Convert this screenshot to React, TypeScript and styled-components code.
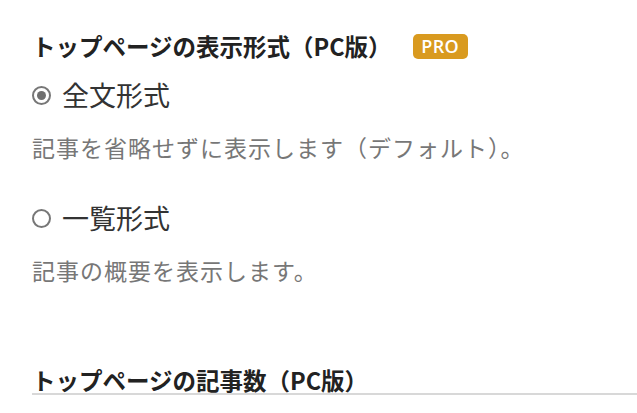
import React, { useState } from 'react';
import styled, { createGlobalStyle } from 'styled-components';

const GlobalStyle = createGlobalStyle`
  html, body {
    margin: 0;
    padding: 0;
    background: #fff;
  }
  body {
    font-family: "Noto Sans CJK JP", "Noto Sans", sans-serif;
  }
`;

const Wrapper = styled.div`
  box-sizing: border-box;
  width: 637px;
  height: 413px;
  overflow: hidden;
  padding: 32px 0 0 32px;
`;

const Section = styled.section`
  display: flex;
  flex-direction: column;
`;

const Heading = styled.h3`
  display: flex;
  align-items: center;
  gap: 21px;
  margin: 0;
  font-size: 23.5px;
  line-height: 28px;
  font-weight: 700;
  color: #222;
`;

const ProBadge = styled.span`
  display: inline-flex;
  align-items: center;
  justify-content: center;
  width: 55px;
  height: 25px;
  border-radius: 5px;
  background: #d99a1f;
  color: #fff;
  font-family: "Open Sans", "Noto Sans", sans-serif;
  font-size: 18px;
  font-weight: 600;
  letter-spacing: 0.3px;
`;

const Option = styled.label<{ first?: boolean }>`
  display: flex;
  align-items: center;
  gap: 11px;
  margin-top: ${(p) => (p.first ? '18px' : '39px')};
  font-size: 27px;
  line-height: 34px;
  color: #333;
  cursor: pointer;
`;

const Radio = styled.span<{ checked: boolean }>`
  box-sizing: border-box;
  width: 19px;
  height: 19px;
  border-radius: 50%;
  border: 2px solid #777;
  display: flex;
  align-items: center;
  justify-content: center;
  &::after {
    content: '';
    width: 9px;
    height: 9px;
    border-radius: 50%;
    background: #6f6f6f;
    display: ${(p) => (p.checked ? 'block' : 'none')};
  }
`;

const Description = styled.p`
  margin: 20px 0 0;
  font-size: 23px;
  line-height: 30px;
  letter-spacing: 1px;
  color: #777;
`;

const NextHeading = styled.h3`
  margin: 82px 0 0;
  font-size: 23.5px;
  line-height: 26px;
  font-weight: 700;
  color: #222;
  border-bottom: 2px solid #d8d8d8;
`;

const options = [
  { key: 'full', label: '全文形式', desc: '記事を省略せずに表示します（デフォルト）。' },
  { key: 'list', label: '一覧形式', desc: '記事の概要を表示します。' },
];

export default function App() {
  const [mode, setMode] = useState('full');

  return (
    <Wrapper>
      <GlobalStyle />
      <Section>
        <Heading>
          トップページの表示形式（PC版）
          <ProBadge>PRO</ProBadge>
        </Heading>
        {options.map((o, idx) => (
          <React.Fragment key={o.key}>
            <Option first={idx === 0} onClick={() => setMode(o.key)}>
              <Radio checked={mode === o.key} />
              {o.label}
            </Option>
            <Description>{o.desc}</Description>
          </React.Fragment>
        ))}
      </Section>
      <NextHeading>トップページの記事数（PC版）</NextHeading>
    </Wrapper>
  );
}
